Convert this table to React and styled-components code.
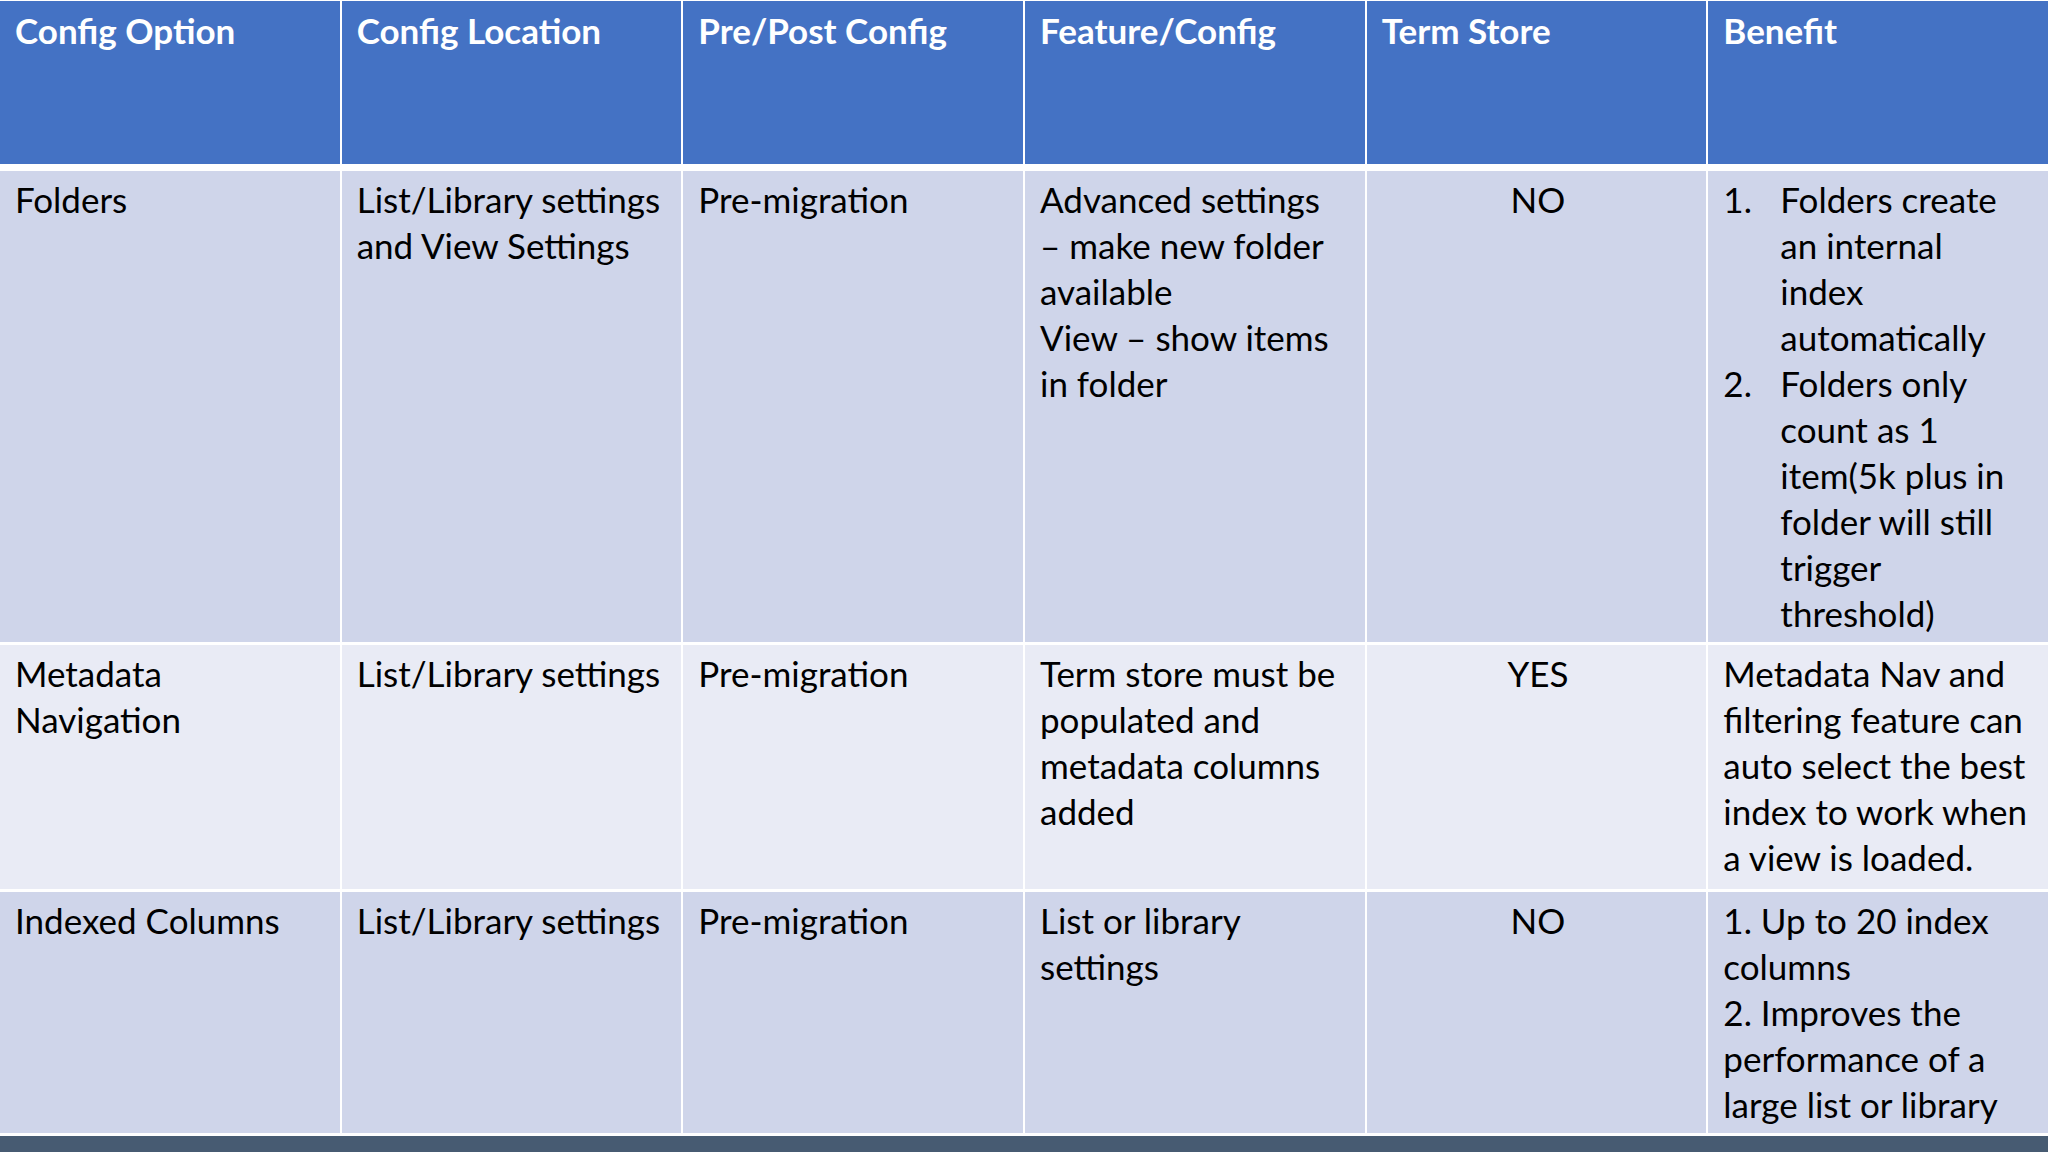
import React from "react";
import styled, { createGlobalStyle } from "styled-components";

const GlobalStyle = createGlobalStyle`
  html, body {
    margin: 0;
    padding: 0;
    background: #ffffff;
  }
  body {
    font-family: Lato, "Open Sans", sans-serif;
  }
`;

const Page = styled.div`
  width: 2048px;
  height: 1152px;
  display: flex;
  flex-direction: column;
  background: #ffffff;
  overflow: hidden;
`;

const Table = styled.div`
  display: flex;
  flex-direction: column;
  gap: 3px;
  padding: 1px 0 3px 0;
`;

const Row = styled.div`
  display: grid;
  grid-template-columns: repeat(6, 1fr);
  column-gap: 2px;
  height: ${(p) => p.$h}px;
`;

const HeadRow = styled(Row)`
  margin-bottom: 4px;
`;

const Cell = styled.div`
  background: ${(p) => (p.$band === "even" ? "#e9ebf5" : "#cfd5ea")};
  padding: 5px 12px 0 15px;
  font-size: 35px;
  line-height: 46px;
  color: #000000;
  white-space: nowrap;
  text-align: ${(p) => (p.$center ? "center" : "left")};
`;

const HeadCell = styled(Cell)`
  background: #4472c4;
  color: #ffffff;
  font-weight: 700;
  padding-top: 6px;
`;

const Line = styled.div``;

const Item = styled.div`
  display: flex;
`;

const Marker = styled.span`
  flex: none;
  width: 57px;
`;

const Footer = styled.div`
  height: 16px;
  background: #475b72;
`;

const headers = [
  "Config Option",
  "Config Location",
  "Pre/Post Config",
  "Feature/Config",
  "Term Store",
  "Benefit",
];

const Lines = ({ lines }) => lines.map((l, i) => <Line key={i}>{l}</Line>);

const NumberedList = ({ items }) =>
  items.map((it, i) => (
    <Item key={i}>
      <Marker>{i + 1}.</Marker>
      <div>
        <Lines lines={it} />
      </div>
    </Item>
  ));

const rows = [
  {
    h: 471,
    band: "odd",
    cells: [
      ["Folders"],
      ["List/Library settings", "and View Settings"],
      ["Pre-migration"],
      [
        "Advanced settings",
        "\u2013 make new folder",
        "available",
        "View \u2013 show items",
        "in folder",
      ],
      ["NO"],
    ],
    benefit: (
      <NumberedList
        items={[
          ["Folders create", "an internal", "index", "automatically"],
          [
            "Folders only",
            "count as 1",
            "item(5k plus in",
            "folder will still",
            "trigger",
            "threshold)",
          ],
        ]}
      />
    ),
  },
  {
    h: 244,
    band: "even",
    cells: [
      ["Metadata", "Navigation"],
      ["List/Library settings"],
      ["Pre-migration"],
      ["Term store must be", "populated and", "metadata columns", "added"],
      ["YES"],
    ],
    benefit: (
      <Lines
        lines={[
          "Metadata Nav and",
          "filtering feature can",
          "auto select the best",
          "index to work when",
          "a view is loaded.",
        ]}
      />
    ),
  },
  {
    h: 241,
    band: "odd",
    cells: [
      ["Indexed Columns"],
      ["List/Library settings"],
      ["Pre-migration"],
      ["List or library", "settings"],
      ["NO"],
    ],
    benefit: (
      <Lines
        lines={[
          "1. Up to 20 index",
          "columns",
          "2. Improves the",
          "performance of a",
          "large list or library",
        ]}
      />
    ),
  },
];

const App = () => (
  <Page>
    <GlobalStyle />
    <Table>
      <HeadRow $h={163}>
        {headers.map((h) => (
          <HeadCell key={h}>{h}</HeadCell>
        ))}
      </HeadRow>
      {rows.map((r, ri) => (
        <Row key={ri} $h={r.h}>
          {r.cells.map((c, ci) => (
            <Cell key={ci} $band={r.band} $center={ci === 4}>
              <Lines lines={c} />
            </Cell>
          ))}
          <Cell $band={r.band}>{r.benefit}</Cell>
        </Row>
      ))}
    </Table>
    <Footer />
  </Page>
);

export default App;
